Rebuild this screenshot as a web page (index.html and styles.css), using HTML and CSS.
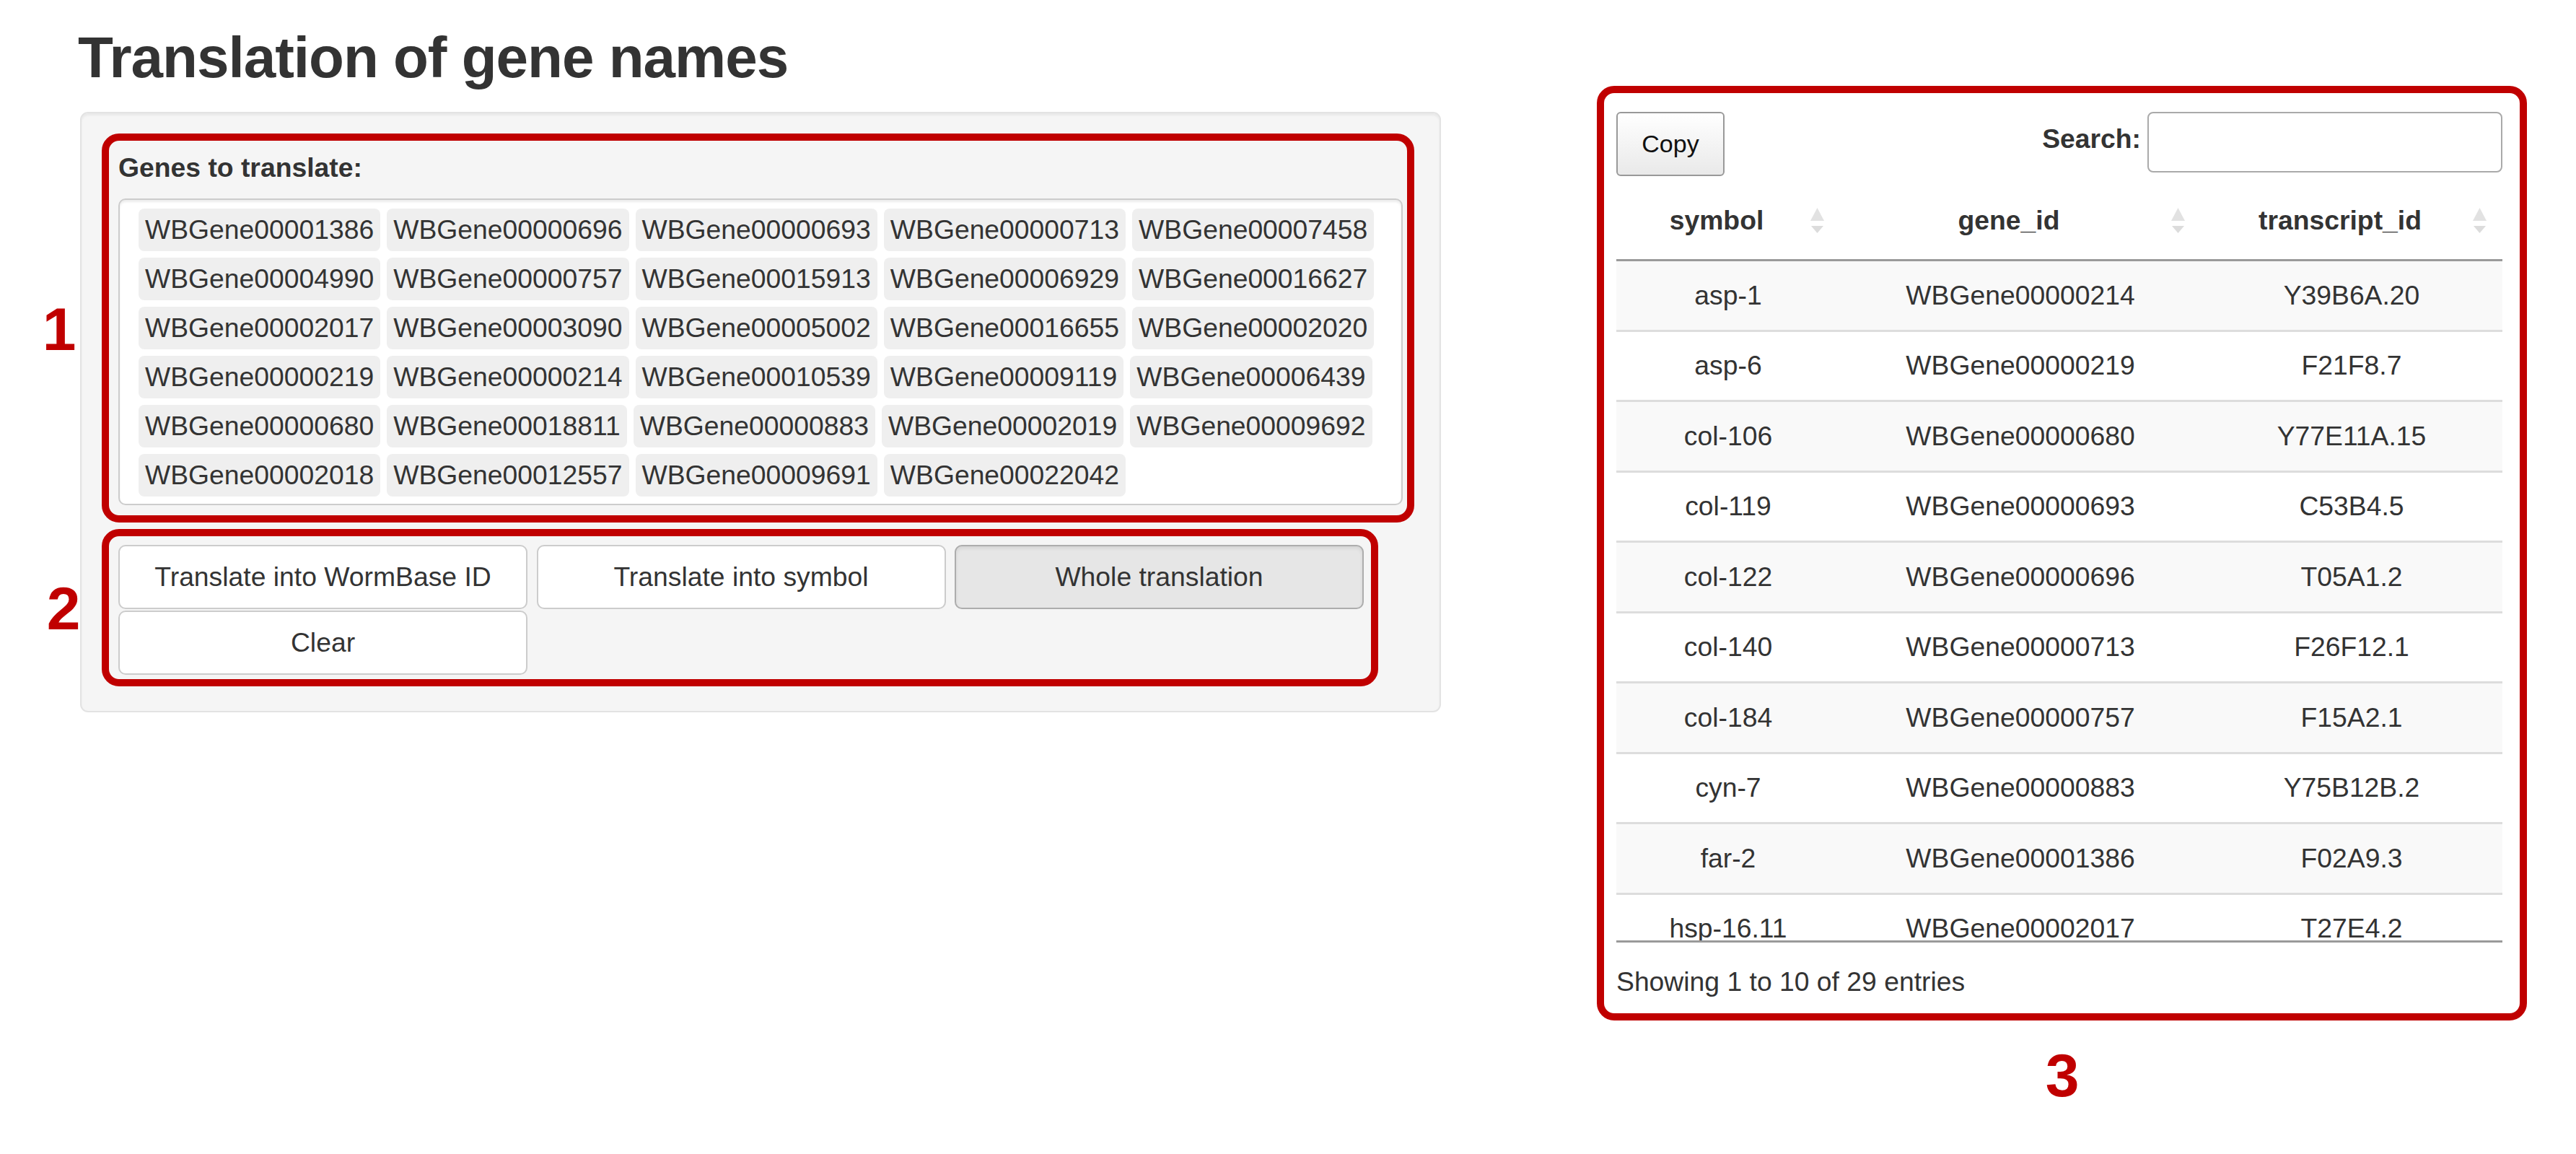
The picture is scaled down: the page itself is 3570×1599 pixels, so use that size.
FILE: index.html
```html
<!DOCTYPE html>
<html lang="en">
<head>
<meta charset="utf-8">
<title>Translation of gene names</title>
<link rel="stylesheet" href="styles.css">
</head>
<body>
<div class="page">
  <h2 class="title">Translation of gene names</h2>
  <div class="layout">
    <div class="well">
      <div class="form-group">
        <label class="field-label">Genes to translate:</label>
        <div class="selectize">
          <span class="chip">WBGene00001386</span><span class="chip">WBGene00000696</span><span class="chip">WBGene00000693</span><span class="chip">WBGene00000713</span><span class="chip">WBGene00007458</span>
          <span class="chip">WBGene00004990</span><span class="chip">WBGene00000757</span><span class="chip">WBGene00015913</span><span class="chip">WBGene00006929</span><span class="chip">WBGene00016627</span>
          <span class="chip">WBGene00002017</span><span class="chip">WBGene00003090</span><span class="chip">WBGene00005002</span><span class="chip">WBGene00016655</span><span class="chip">WBGene00002020</span>
          <span class="chip">WBGene00000219</span><span class="chip">WBGene00000214</span><span class="chip">WBGene00010539</span><span class="chip">WBGene00009119</span><span class="chip">WBGene00006439</span>
          <span class="chip">WBGene00000680</span><span class="chip">WBGene00018811</span><span class="chip">WBGene00000883</span><span class="chip">WBGene00002019</span><span class="chip">WBGene00009692</span>
          <span class="chip">WBGene00002018</span><span class="chip">WBGene00012557</span><span class="chip">WBGene00009691</span><span class="chip">WBGene00022042</span>
        </div>
      </div>
      <div class="actions">
        <button class="btn">Translate into WormBase ID</button>
        <button class="btn">Translate into symbol</button>
        <button class="btn btn-active">Whole translation</button>
        <button class="btn">Clear</button>
      </div>
    </div>

    <div class="right">
      <div class="dt-top">
        <button class="copy-btn">Copy</button>
        <div class="filter">
          <label class="filter-label">Search:</label>
          <input class="filter-input" type="search" aria-label="Search">
        </div>
      </div>
      <div class="dt-scroll">
        <table class="dt">
          <colgroup>
            <col class="c1"><col class="c2"><col class="c3">
          </colgroup>
          <thead>
            <tr>
              <th>symbol<svg class="sort" viewBox="0 0 19 36" width="19" height="36"><polygon points="0,18 9.5,0 19,18" fill="#e2e2e2"/><polygon points="1,25 18,25 9.5,35" fill="#dcdcdc"/></svg></th>
              <th>gene_id<svg class="sort" viewBox="0 0 19 36" width="19" height="36"><polygon points="0,18 9.5,0 19,18" fill="#e2e2e2"/><polygon points="1,25 18,25 9.5,35" fill="#dcdcdc"/></svg></th>
              <th>transcript_id<svg class="sort" viewBox="0 0 19 36" width="19" height="36"><polygon points="0,18 9.5,0 19,18" fill="#e2e2e2"/><polygon points="1,25 18,25 9.5,35" fill="#dcdcdc"/></svg></th>
            </tr>
          </thead>
          <tbody>
            <tr><td>asp-1</td><td>WBGene00000214</td><td>Y39B6A.20</td></tr>
            <tr><td>asp-6</td><td>WBGene00000219</td><td>F21F8.7</td></tr>
            <tr><td>col-106</td><td>WBGene00000680</td><td>Y77E11A.15</td></tr>
            <tr><td>col-119</td><td>WBGene00000693</td><td>C53B4.5</td></tr>
            <tr><td>col-122</td><td>WBGene00000696</td><td>T05A1.2</td></tr>
            <tr><td>col-140</td><td>WBGene00000713</td><td>F26F12.1</td></tr>
            <tr><td>col-184</td><td>WBGene00000757</td><td>F15A2.1</td></tr>
            <tr><td>cyn-7</td><td>WBGene00000883</td><td>Y75B12B.2</td></tr>
            <tr><td>far-2</td><td>WBGene00001386</td><td>F02A9.3</td></tr>
            <tr><td>hsp-16.11</td><td>WBGene00002017</td><td>T27E4.2</td></tr>
          </tbody>
        </table>
      </div>
      <div class="dt-info">Showing 1 to 10 of 29 entries</div>
    </div>
  </div>

  <div class="annot box1"></div>
  <div class="annot box2"></div>
  <div class="annot box3"></div>
  <div class="num n1">1</div>
  <div class="num n2">2</div>
  <div class="num n3">3</div>
</div>
</body>
</html>
```

FILE: styles.css
```css
* {
  box-sizing: border-box;
}

body {
  margin: 0;
  background: #ffffff;
  font-family: "Liberation Sans", Arial, Helvetica, sans-serif;
  font-size: 37.3px;
  line-height: 53px;
  color: #333333;
}

.page {
  position: relative;
  width: 3570px;
  height: 1599px;
  padding-left: 111px;
  overflow: hidden;
}

.title {
  margin: 0 0 31px -3px;
  padding-top: 36px;
  font-size: 80px;
  line-height: 88px;
  font-weight: 700;
  letter-spacing: -1px;
  color: #333333;
}

.layout {
  display: flex;
  align-items: flex-start;
}

/* ---------- left well ---------- */
.well {
  width: 1886px;
  padding: 49px 51px 50px;
  background: #f5f5f5;
  border: 2px solid #e3e3e3;
  border-radius: 11px;
  box-shadow: inset 0 3px 3px rgba(0, 0, 0, 0.05);
}

.field-label {
  display: block;
  font-weight: 700;
  margin-bottom: 16px;
}

.selectize {
  display: flex;
  flex-wrap: wrap;
  gap: 9px;
  padding: 12px 18px 10px 26px;
  background: #ffffff;
  border: 2px solid #cccccc;
  border-radius: 10px;
  box-shadow: inset 0 3px 3px rgba(0, 0, 0, 0.075);
}

.chip {
  height: 59px;
  line-height: 59px;
  padding: 0 9px;
  background: #efefef;
  border-radius: 8px;
  color: #333333;
}

.actions {
  display: flex;
  flex-wrap: wrap;
  column-gap: 12.5px;
  row-gap: 2px;
  width: 1730px;
  margin-top: 55px;
}

.btn {
  width: 567px;
  height: 89px;
  padding: 0;
  border: 2px solid #cccccc;
  border-radius: 10px;
  background: #ffffff;
  font-family: inherit;
  font-size: 37.3px;
  color: #333333;
}

.btn-active {
  background: #e6e6e6;
  border-color: #adadad;
  box-shadow: inset 0 3px 5px rgba(0, 0, 0, 0.08);
}

/* ---------- right table ---------- */
.right {
  margin-left: 243px;
  width: 1228px;
}

.dt-top {
  display: flex;
  justify-content: space-between;
  align-items: flex-start;
  height: 97px;
}

.copy-btn {
  width: 150px;
  height: 89px;
  padding: 0;
  border: 2px solid #999999;
  border-radius: 6px;
  background: linear-gradient(to bottom, #ffffff 0%, #e9e9e9 100%);
  font-family: inherit;
  font-size: 34px;
  color: #111111;
}

.filter {
  display: flex;
  align-items: flex-start;
}

.filter-label {
  margin-top: 11px;
  font-weight: 700;
}

.filter-input {
  width: 492px;
  height: 84px;
  margin-left: 9px;
  border: 2px solid #aaaaaa;
  border-radius: 8px;
  background: #ffffff;
  font-family: inherit;
  font-size: 34px;
}

.dt-scroll {
  height: 1054px;
  overflow: hidden;
  border-bottom: 3px solid #9a9a9a;
}

.dt {
  width: 1228px;
  table-layout: fixed;
  border-collapse: separate;
  border-spacing: 0;
}

.c1 { width: 310px; }
.c2 { width: 500px; }
.c3 { width: 418px; }

.dt th {
  position: relative;
  padding: 27px 80px 27px 48px;
  font-weight: 700;
  text-align: center;
  border-bottom: 3px solid #9a9a9a;
}

.sort {
  position: absolute;
  right: 22px;
  top: 50%;
  transform: translateY(-50%);
}

.dt td {
  padding: 20.75px 27px;
  text-align: center;
  border-top: 3px solid #dddddd;
  white-space: nowrap;
}

.dt tbody tr:first-child td {
  border-top: none;
}

.dt tbody tr:nth-child(odd) {
  background: #f9f9f9;
}

.dt-info {
  padding-top: 28px;
  color: #333333;
}

/* ---------- red annotations ---------- */
.annot {
  position: absolute;
  border: 10px solid #c00000;
  border-radius: 24px;
  pointer-events: none;
}

.box1 { left: 141px; top: 185px; width: 1819px; height: 539px; }
.box2 { left: 141px; top: 733px; width: 1769px; height: 218px; }
.box3 { left: 2213px; top: 119px; width: 1289px; height: 1295px; }

.num {
  position: absolute;
  width: 100px;
  text-align: center;
  font-size: 84px;
  line-height: 84px;
  font-weight: 700;
  color: #c00000;
}

.n1 { left: 32px; top: 414px; }
.n2 { left: 38px; top: 801px; }
.n3 { left: 2808px; top: 1448px; }
```
